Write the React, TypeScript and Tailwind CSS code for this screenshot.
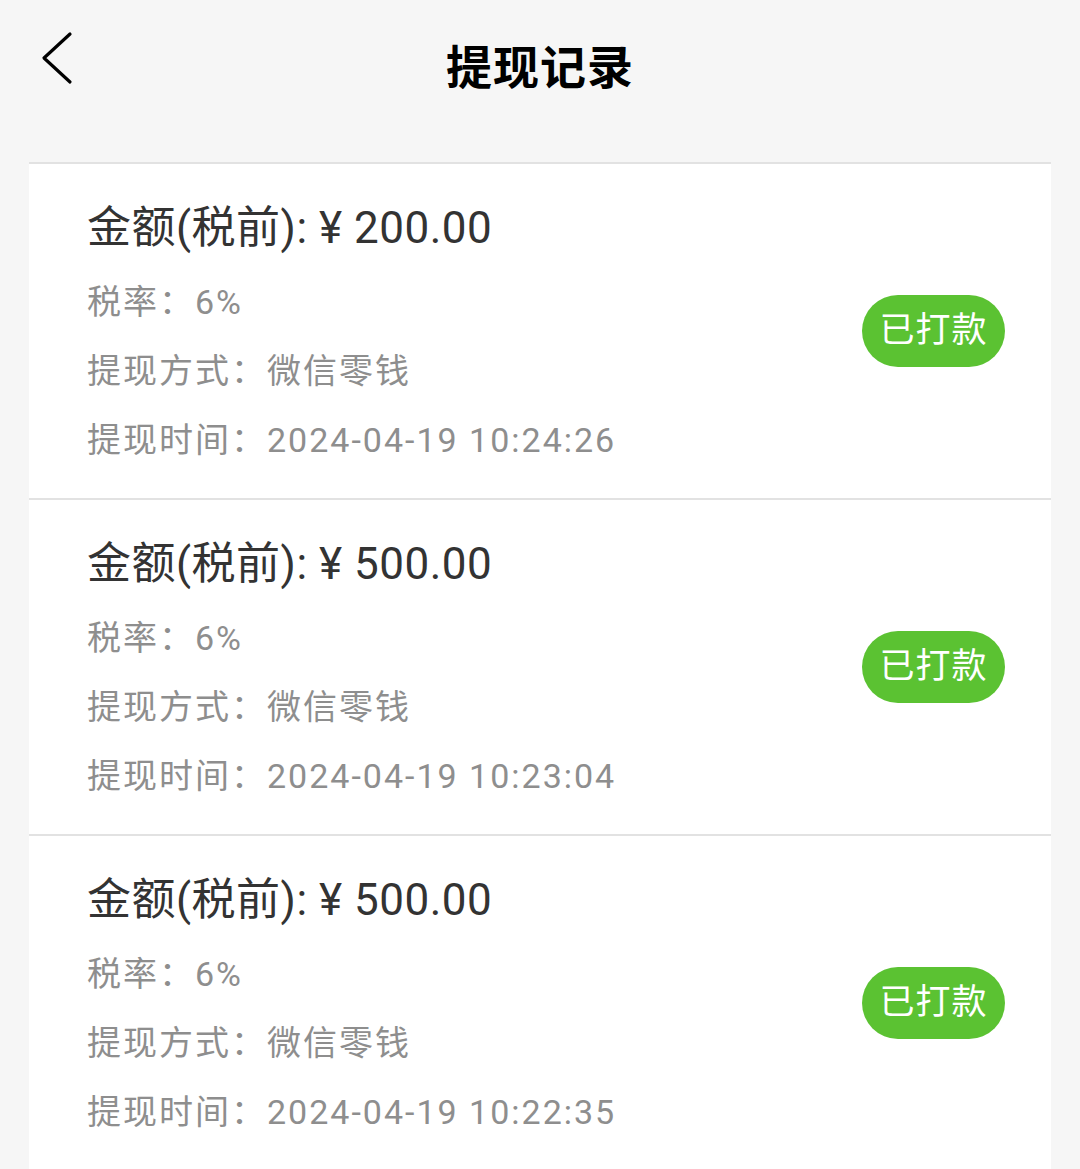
import React from "react";

const records = [
  { amount: "200.00", time: "2024-04-19 10:24:26" },
  { amount: "500.00", time: "2024-04-19 10:23:04" },
  { amount: "500.00", time: "2024-04-19 10:22:35" },
];

const font = { fontFamily: '"Roboto", "Noto Sans CJK SC", sans-serif' };

export default function App() {
  return (
    <div className="min-h-[1169px] w-[1080px] bg-[#f6f6f6]" style={font}>
      <div className="relative h-[162px]">
        <div className="flex h-[128px] items-center justify-center">
          <h1 className="text-[46px] font-bold leading-none text-black tracking-[1px]" style={{ fontFamily: '"Noto Sans CJK SC", sans-serif' }}>
            提现记录
          </h1>
        </div>
        <svg className="absolute left-[36px] top-[28px]" width="44" height="60" viewBox="0 0 44 60">
          <path d="M34 6 L8 30 L34 54" fill="none" stroke="#000" strokeWidth="3.2" strokeLinecap="round" strokeLinejoin="round" />
        </svg>
      </div>
      <div className="mx-[29px] border-t-2 border-[#e2e2e2]">
        {records.map((r, i) => (
          <div key={i} className="flex items-start justify-between border-b-2 border-[#e2e2e2] bg-white pl-[58px] pr-[46px] pt-[36px] pb-[23px]">
            <div>
              <div className="mb-[12px] text-[44px] leading-[56px] tracking-[0.5px] text-[#333333]">
                金额(税前): ¥ {r.amount}
              </div>
              <div className="text-[34px] leading-[69px] tracking-[2px] text-[#8e8e8e]">税率：6%</div>
              <div className="text-[34px] leading-[69px] tracking-[2px] text-[#8e8e8e]">提现方式：微信零钱</div>
              <div className="text-[34px] leading-[69px] tracking-[2px] text-[#8e8e8e]">提现时间：{r.time}</div>
            </div>
            <div className="mt-[95px] flex h-[72px] w-[143px] items-center justify-center rounded-full bg-[#5bc232] text-[35px] tracking-[1px] text-white">
              已打款
            </div>
          </div>
        ))}
      </div>
    </div>
  );
}
